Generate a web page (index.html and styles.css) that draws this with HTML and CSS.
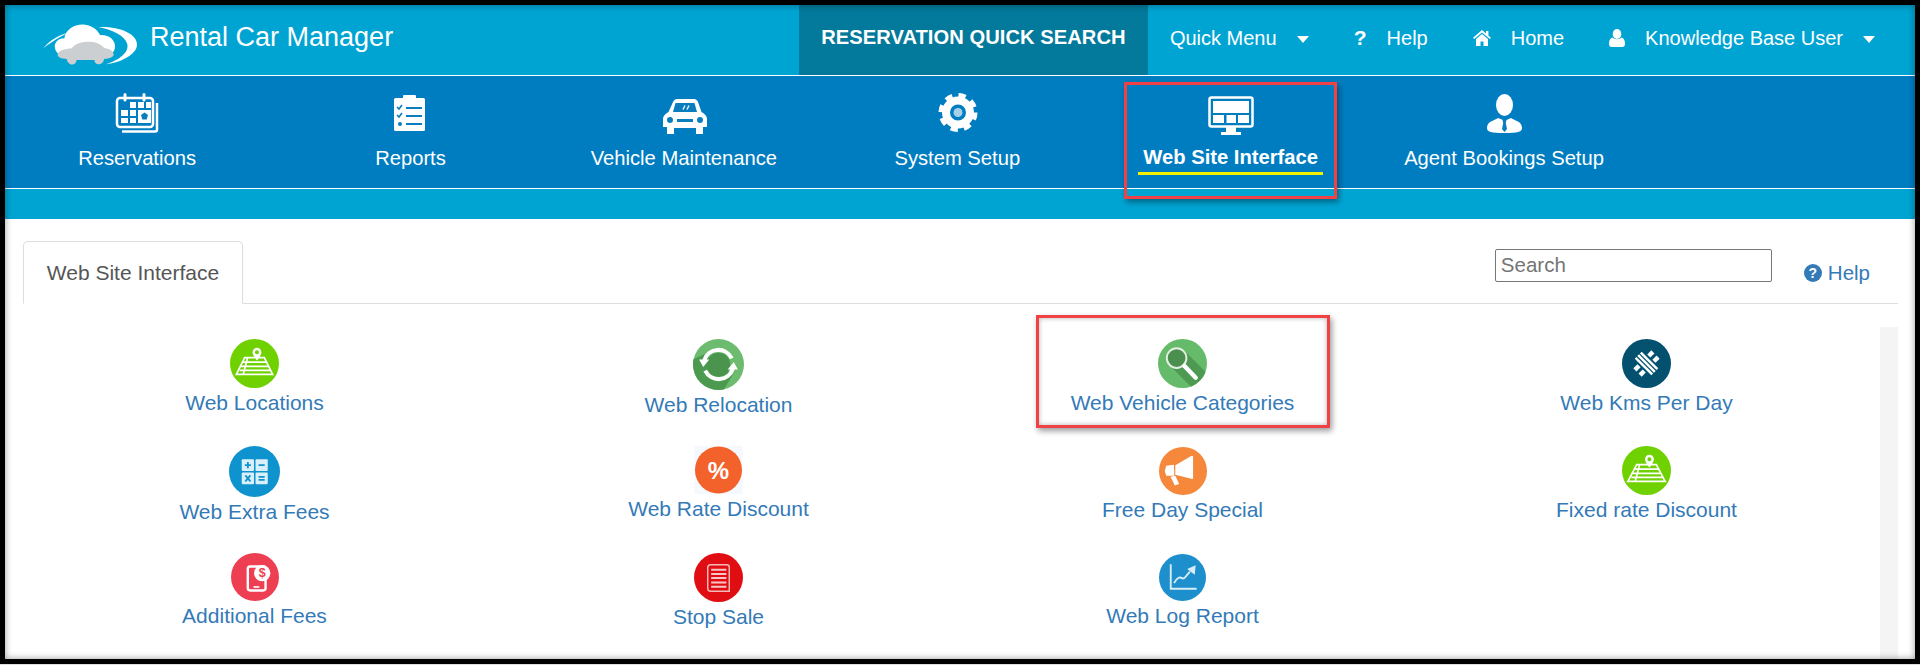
FILE: index.html
```html
<!DOCTYPE html>
<html lang="en">
<head>
<meta charset="utf-8">
<title>Rental Car Manager</title>
<link rel="stylesheet" href="styles.css">
</head>
<body>
<div class="frame">
  <header class="topbar">
    <svg class="logo" viewBox="0 0 330 180">
      <path fill="#fff" d="M25 100C45 75 75 58 105 52C80 62 50 80 25 100Z"/>
      <path fill="#fff" d="M190 36C250 33 308 55 306 90C305 120 250 145 212 148C255 135 285 110 276 85C268 62 235 45 190 36Z"/>
      <path fill="#fff" d="M60 100C56 85 68 70 88 70C92 42 120 26 150 29C175 32 190 48 195 60C222 58 242 75 240 97C238 118 220 122 200 120L80 120C70 120 62 110 60 100Z"/>
      <path fill="#cbcfd2" d="M68 118C70 105 90 103 110 100C120 85 140 80 165 80C185 80 200 90 210 100C225 102 235 108 236 118C235 128 225 130 207 132C205 150 180 155 178 135L125 135C122 155 98 152 95 132C80 132 68 128 68 118Z"/>
    </svg>
    <div class="brand">Rental Car Manager</div>
    <a class="quick-search">RESERVATION QUICK SEARCH</a>
    <a class="top-item first"><span>Quick Menu</span><i class="caret"></i></a>
    <a class="top-item"><b class="q-glyph">?</b><span>Help</span></a>
    <a class="top-item">
      <svg class="ti-home" viewBox="0 0 18 16"><path fill="#fff" d="M9 0 L13 3.4V1h2.4v4.4L18 7.7 16.8 9 9 2.4 1.200 9 0 7.700ZM9 4l6 5v7h-4.500v-4.500h-3V16H3V9Z"/></svg>
      <span>Home</span>
    </a>
    <a class="top-item">
      <svg class="ti-user" viewBox="0 0 16 18"><ellipse fill="#fff" cx="8" cy="5" rx="4.300" ry="5"/><path fill="#fff" d="M3.500 8.500C5 10.800 11 10.800 12.500 8.500 15 9 16 11.500 16 15c0 2-1 3-3 3H3c-2 0-3-1-3-3C0 11.500 1 9 3.500 8.500Z"/></svg>
      <span>Knowledge Base User</span><i class="caret"></i>
    </a>
  </header>

  <nav class="mainnav">
    <div class="nav-list">
    <a class="nav-item">
      <svg class="nav-icon" viewBox="0 0 48 48">
        <rect x="4" y="7" width="36" height="29" rx="3" fill="none" stroke="#fff" stroke-width="2.500"/>
        <path d="M44 12V38.500a2 2 0 0 1-2 2H9" fill="none" stroke="#fff" stroke-width="2.500"/>
        <path d="M12 3.500V9M31 3.500V9" stroke="#fff" stroke-width="3" stroke-linecap="round"/>
        <g fill="#fff"><rect x="17" y="11" width="6" height="6"/><rect x="25" y="11" width="6" height="6"/><rect x="33" y="11" width="5" height="6"/><rect x="8" y="19" width="7" height="6"/><rect x="17" y="19" width="6" height="6"/><rect x="25" y="19" width="13" height="13"/><rect x="8" y="27" width="7" height="5"/><rect x="17" y="27" width="6" height="5"/></g>
        <path fill="#0a7dbe" d="M31.500 21.500l3.500 2.600-1.300 4.400h-4.400L28 24.100Z"/>
      </svg>
      <span class="nav-label">Reservations</span>
    </a>
    <a class="nav-item">
      <svg class="nav-icon" viewBox="0 0 48 48">
        <rect x="8" y="7" width="31" height="33" rx="1.500" fill="#fff"/>
        <rect x="17" y="4" width="13" height="5" rx="1" fill="#fff"/>
        <path d="M11 16l2 2 3-4M11 24l2 2 3-4" fill="none" stroke="#0a7dbe" stroke-width="1.600"/>
        <circle cx="14" cy="33" r="2" fill="#0a7dbe"/>
        <path d="M20 17H36M20 25H36M20 33H36" stroke="#0a7dbe" stroke-width="2"/>
      </svg>
      <span class="nav-label">Reports</span>
    </a>
    <a class="nav-item">
      <svg class="nav-icon" viewBox="0 0 48 48">
        <path fill="#fff" d="M13 11C14 8.500 16 8 18 8H33C35 8 37 8.500 38 11L41.500 21C45 23 47 25 47 28V36H43V43H36V37H14V43H7V36H3V28C3 25 5 23 8.500 21Z"/>
        <path fill="#0a7dbe" d="M15.500 12H34.500L37 21H13Z"/>
        <path d="M25 14.500l-2 4M29 14.500l-2 4" stroke="#fff" stroke-width="1.300"/>
        <circle cx="10" cy="29" r="3" fill="#0a7dbe"/><circle cx="40" cy="29" r="3" fill="#0a7dbe"/>
        <rect x="17" y="28" width="16" height="3" fill="#0a7dbe"/>
      </svg>
      <span class="nav-label">Vehicle Maintenance</span>
    </a>
    <a class="nav-item">
      <svg class="nav-icon" viewBox="0 0 48 48">
        <circle cx="25" cy="21.500" r="12" fill="none" stroke="#fff" stroke-width="8"/>
        <circle cx="25" cy="21.500" r="16.500" fill="none" stroke="#fff" stroke-width="6" stroke-dasharray="6.960 6"/>
        <circle cx="25" cy="21.500" r="4.500" fill="#a6cfe8"/>
      </svg>
      <span class="nav-label">System Setup</span>
    </a>
    <a class="nav-item active">
      <svg class="nav-icon" viewBox="0 0 48 48">
        <rect x="2.500" y="6.500" width="43" height="29" rx="2" fill="none" stroke="#fff" stroke-width="2.500"/>
        <g fill="#fff"><rect x="6" y="10" width="36" height="12"/><rect x="6" y="24" width="11" height="8"/><rect x="19.500" y="24" width="9.500" height="8"/><rect x="31" y="24" width="11" height="8"/><rect x="19" y="36" width="10" height="5"/><rect x="14" y="41" width="20" height="3"/></g>
      </svg>
      <span class="nav-label">Web Site Interface</span>
    </a>
    <a class="nav-item">
      <svg class="nav-icon" viewBox="0 0 48 48">
        <ellipse cx="24.500" cy="14" rx="8.500" ry="11" fill="#fff"/>
        <path fill="#fff" d="M18 27C14 30 7 30 7 37C7 41 11 42 24.500 42C38 42 42 41 42 37C42 30 35 30 31 27L26.500 29H23Z"/>
        <path fill="#0a7dbe" d="M22.500 29H26.500L25.800 32L27 38L24.500 41L22 38L23.200 32Z"/>
      </svg>
      <span class="nav-label">Agent Bookings Setup</span>
    </a>
    </div>
  </nav>

  <div class="band"></div>

  <main class="content">
    <div class="tabbar">
      <div class="tab">Web Site Interface</div>
      <input class="search" type="text" placeholder="Search">
      <a class="help"><span class="help-dot">?</span><span>Help</span></a>
    </div>
    <div class="panel">
      <div class="links">
        <a class="link">
          <svg class="ic" viewBox="0 0 100 100"><circle cx="50" cy="50" r="50" fill="#6fd100"/><path d="M30 38H70L87 72H13ZM27 47H74M21 56H80M20 64H82M36 38L27 72" fill="none" stroke="#fff" stroke-width="3.500"/><path fill="#fff" d="M55 18a9 9 0 0 1 9 9c0 6-9 17-9 17s-9-11-9-17a9 9 0 0 1 9-9Z"/><circle cx="55" cy="27" r="4" fill="#6fd100"/></svg>
          <span>Web Locations</span>
        </a>
        <a class="link">
          <svg class="ic lg" viewBox="0 0 100 100"><defs><clipPath id="cr"><circle cx="50" cy="50" r="50"/></clipPath></defs><circle cx="50" cy="50" r="50" fill="#6cbb6e"/><path clip-path="url(#cr)" fill="#4c9a50" d="M0 40L22 30 78 70 60 100H0Z"/><circle cx="50" cy="50" r="23" fill="#4a944e"/><path d="M22 42A29 29 0 0 1 76 38M78 58A29 29 0 0 1 24 62" fill="none" stroke="#fff" stroke-width="8"/><path fill="#fff" d="M12 40H32L20 55ZM68 60H88L80 45Z"/></svg>
          <span>Web Relocation</span>
        </a>
        <a class="link">
          <svg class="ic" viewBox="0 0 100 100"><defs><clipPath id="cs"><circle cx="50" cy="50" r="50"/></clipPath></defs><circle cx="50" cy="50" r="50" fill="#66bb6a"/><path clip-path="url(#cs)" fill="#4f9a53" d="M25 55L55 25 110 80 80 110Z"/><circle cx="38" cy="39" r="20" fill="#4b8f4e" stroke="#e3eee3" stroke-width="4"/><path d="M54 55L77 79" stroke="#fff" stroke-width="9" stroke-linecap="round"/></svg>
          <span>Web Vehicle Categories</span>
        </a>
        <a class="link">
          <svg class="ic" viewBox="0 0 100 100"><circle cx="50" cy="50" r="50" fill="#03506f"/><g fill="#fff" transform="rotate(45 50 50)"><rect x="26" y="40" width="48" height="5"/><rect x="26" y="47.500" width="48" height="5"/><rect x="26" y="55" width="48" height="5"/><rect x="38" y="24" width="9" height="12"/><rect x="53" y="24" width="9" height="12"/><rect x="38" y="64" width="9" height="12"/><rect x="53" y="64" width="9" height="12"/></g></svg>
          <span>Web Kms Per Day</span>
        </a>

        <a class="link">
          <svg class="ic lg" viewBox="0 0 100 100"><circle cx="50" cy="50" r="50" fill="#0e93ce"/><g fill="#d9eff9"><rect x="25" y="26" width="24" height="23" rx="2"/><rect x="52" y="26" width="24" height="23" rx="2"/><rect x="25" y="52" width="24" height="23" rx="2"/><rect x="52" y="52" width="24" height="23" rx="2"/></g><path d="M31 37.500H43M37 31.500V43.500M58 37.500H70M32 57.500L42 69.500M42 57.500L32 69.500M58 60.500H70M58 66.500H70" stroke="#0e93ce" stroke-width="3.500" fill="none"/></svg>
          <span>Web Extra Fees</span>
        </a>
        <a class="link">
          <svg class="ic rate" viewBox="0 0 100 100"><rect width="100" height="100" fill="#f5f8fc"/><circle cx="50" cy="50" r="49" fill="#f4622b"/><text class="pct" x="50" y="68">%</text></svg>
          <span>Web Rate Discount</span>
        </a>
        <a class="link">
          <svg class="ic sm inset" viewBox="0 0 100 100"><circle cx="50" cy="50" r="50" fill="#f5883a"/><path fill="#fff" d="M34 38L67 19 71 19 71 66 67 66 34 58ZM15 39L31 37 32 60 15 60 12 50Z"/><path fill="#fff" d="M24 62L34 60 42 77 33 80Z"/></svg>
          <span>Free Day Special</span>
        </a>
        <a class="link">
          <svg class="ic" viewBox="0 0 100 100"><circle cx="50" cy="50" r="50" fill="#6fd100"/><path d="M30 38H70L88 72H12ZM27 47H74M21 56H80M19 64H82M36 38L27 72" fill="none" stroke="#fff" stroke-width="3.500"/><path fill="#fff" d="M56 18a9 9 0 0 1 9 9c0 6-9 17-9 17s-9-11-9-17a9 9 0 0 1 9-9Z"/><circle cx="56" cy="27" r="4" fill="#6fd100"/></svg>
          <span>Fixed rate Discount</span>
        </a>

        <a class="link">
          <svg class="ic sm" viewBox="0 0 100 100"><circle cx="50" cy="50" r="50" fill="#ee3e52"/><rect x="35" y="28" width="37" height="50" rx="5" fill="none" stroke="#fff" stroke-width="5"/><rect x="47" y="69" width="12" height="3.500" fill="#fff"/><circle cx="65" cy="42" r="17" fill="#fff"/><text class="dollar" x="65" y="51">$</text></svg>
          <span>Additional Fees</span>
        </a>
        <a class="link">
          <svg class="ic" viewBox="0 0 100 100"><circle cx="50" cy="50" r="50" fill="#e00e12"/><path d="M28 30a6 6 0 0 1 6-6H67a5 5 0 0 1 5 5V78H34a6 6 0 0 1-6-6Z" fill="none" stroke="#f6b9ba" stroke-width="3"/><path d="M35 34H66M35 43H66M35 51H66M35 60H66M35 69H66" stroke="#f9c6c7" stroke-width="4"/></svg>
          <span>Stop Sale</span>
        </a>
        <a class="link">
          <svg class="ic xs inset" viewBox="0 0 100 100"><circle cx="50" cy="50" r="50" fill="#1c8fcc"/><path d="M25 22V74H80" fill="none" stroke="#d8edf8" stroke-width="4"/><path d="M32 62C38 50 44 48 50 52C56 54 58 44 66 38" fill="none" stroke="#d8edf8" stroke-width="4"/><path fill="#d8edf8" d="M60 32L78 24 76 44Z"/></svg>
          <span>Web Log Report</span>
        </a>
      </div>
      <div class="scrolltrack"></div>
    </div>
  </main>

  <div class="callout callout-nav"></div>
  <div class="callout callout-link"></div>
</div>
</body>
</html>
```

FILE: styles.css
```css
* { box-sizing: border-box; }
html, body { margin: 0; padding: 0; }
body {
  background: #ddd;
  font-family: "Liberation Sans", Arial, sans-serif;
  overflow: hidden;
}
a { color: inherit; text-decoration: none; }

.frame {
  position: relative;
  width: 1920px;
  height: 664px;
  border: 5px solid #000;
  background: #fff;
  display: flex;
  flex-direction: column;
  overflow: hidden;
}
.frame::after {
  content: "";
  position: absolute;
  inset: 0;
  pointer-events: none;
  box-shadow: inset 0 0 7px rgba(0, 0, 0, .4);
}

/* top bar */
.topbar {
  height: 70px;
  background: #00a4d3;
  color: #fff;
  display: flex;
  align-items: center;
  padding: 0 40px 0 30px;
  font-size: 20px;
  flex: none;
}
.logo { width: 110px; height: 60px; align-self: flex-start; margin-top: 10px; flex: none; }
.brand { font-size: 27px; margin-left: 5px; margin-top: -6px; }
.quick-search {
  margin-left: auto;
  align-self: stretch;
  width: 349px;
  background: #03799b;
  font-size: 20.150px;
  font-weight: 700;
  letter-spacing: .05px;
  display: flex;
  align-items: center;
  justify-content: center;
  padding-bottom: 5px;
}
.top-item { display: flex; align-items: center; gap: 20px; margin-left: 45px; padding-bottom: 4px; }
.top-item.first { margin-left: 22px; }
.caret {
  display: block;
  width: 0; height: 0;
  border: solid transparent;
  border-width: 7px 6px 0;
  border-top-color: #fff;
  margin-top: 2px;
}
.q-glyph { font-size: 21px; width: 13px; text-align: center; }
.ti-home { width: 18px; height: 16px; }
.ti-user { width: 16px; height: 18px; }

/* main nav */
.mainnav {
  height: 114px;
  flex: none;
  background: #007dc1;
  border-top: 1px solid #fff;
  border-bottom: 1px solid #fff;
  color: #fff;
  padding-top: 15px;
}
.nav-list {
  display: grid;
  grid-template-columns: repeat(6, 273.400px);
  margin-left: -4.600px;
}
.nav-item {
  display: flex;
  flex-direction: column;
  align-items: center;
  font-size: 20.200px;
}
.nav-icon { width: 48px; height: 48px; overflow: visible; }
.nav-label { line-height: 30px; margin-top: 4px; white-space: nowrap; }
.active .nav-label {
  font-weight: 700;
  padding: 0 5px;
  margin-top: 4px;
  line-height: 29px;
  border-bottom: 3px solid #f5f000;
}
.band { height: 30px; background: #00a4d3; flex: none; }

/* content */
.content { flex: 1; display: flex; flex-direction: column; min-height: 0; }
.tabbar {
  margin: 22px 17px 0 18px;
  height: 63px;
  border-bottom: 1px solid #ddd;
  display: flex;
  align-items: flex-start;
  flex: none;
}
.tab {
  width: 220px;
  height: 63px;
  border: 1px solid #ddd;
  border-bottom: 1px solid #fff;
  border-radius: 5px 5px 0 0;
  color: #555;
  font-size: 21px;
  line-height: 62px;
  text-align: center;
}
.search {
  margin: 8px 0 0 auto;
  width: 277px;
  height: 33px;
  border: 1px solid #767676;
  border-radius: 2px;
  padding: 0 5px 2px;
  font: 20.500px "Liberation Sans", Arial, sans-serif;
  color: #555;
  background: #fff;
}
.search::placeholder { color: #757575; opacity: 1; }
.help {
  margin: 17px 28px 0 32px;
  color: #337ab7;
  font-size: 20.500px;
  line-height: 30px;
  display: flex;
  align-items: center;
  gap: 6px;
}
.help-dot {
  width: 18px; height: 18px;
  border-radius: 50%;
  background: #337ab7;
  color: #fff;
  font-size: 14px;
  font-weight: 700;
  line-height: 18px;
  text-align: center;
}

.panel { flex: 1; display: flex; padding: 0 17px 0 17.500px; min-height: 0; }
.links {
  width: 1856px;
  padding-top: 35px;
  display: grid;
  grid-template-columns: repeat(4, 464px);
  grid-auto-rows: 107px;
}
.link {
  display: flex;
  flex-direction: column;
  align-items: center;
  color: #337ab7;
  font-size: 21px;
  line-height: 30px;
  white-space: nowrap;
}
.ic { width: 49px; height: 49px; flex: none; }
.ic.lg { width: 51px; height: 51px; }
.ic.sm { width: 48px; height: 48px; }
.ic.xs { width: 47px; height: 47px; }
.ic.inset { margin-top: 1px; }
.ic.rate { width: 49px; height: 48px; }
.pct { fill: #fff; font: 700 50px "Liberation Sans", Arial, sans-serif; text-anchor: middle; }
.dollar { fill: #ee3e52; font: 700 26px "Liberation Sans", Arial, sans-serif; text-anchor: middle; }
.scrolltrack { width: 18px; margin: 23px 0 0 1.500px; background: #f4f4f4; flex: none; }

/* annotation boxes drawn over the page */
.callout {
  position: absolute;
  border: 3px solid #f04245;
  box-shadow: 2px 3px 6px rgba(0, 0, 0, .4);
  pointer-events: none;
}
.callout-nav { left: 1119px; top: 77px; width: 213px; height: 117px; }
.callout-link {
  left: 1031px; top: 310px; width: 294px; height: 113px;
  box-shadow: 2px 3px 6px rgba(0, 0, 0, .4), inset 0 0 5px rgba(0, 0, 0, .3);
}
```
